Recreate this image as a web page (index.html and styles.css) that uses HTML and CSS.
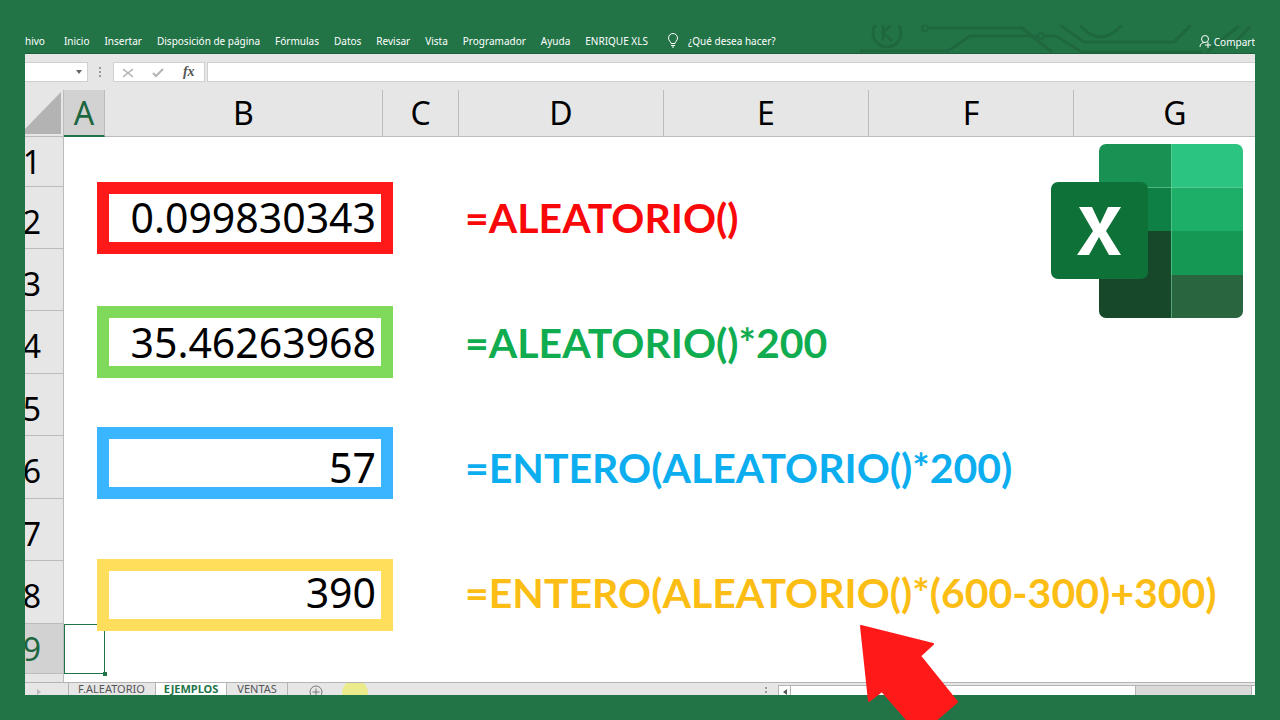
FILE: index.html
```html
<!DOCTYPE html>
<html lang="es">
<head>
<meta charset="utf-8">
<title>Función ALEATORIO en Excel</title>
<link rel="stylesheet" href="styles.css">
</head>
<body>
<main class="window">
  <header class="ribbon">
    <svg class="circuit" viewBox="0 0 400 29" fill="none" stroke="#1f683f" stroke-width="3" aria-hidden="true">
      <circle cx="32" cy="8" r="14"/>
      <path d="M28 0v16M36 0l-8 8 9 8"/>
      <circle cx="70" cy="3" r="3" stroke-width="2"/>
      <path d="M73 3h94l30 24M5 26h88l22-15h68M189 11h12l26 16h120M205 0l24 17h90l17-17M225 0q20 24 42 0M352 27l32-26M375 22l20-20"/>
      <circle cx="186" cy="11" r="3" stroke-width="2"/>
    </svg>
    <nav class="menu">
      <button class="file">hivo</button><button>Inicio</button><button>Insertar</button><button>Disposición de página</button><button>Fórmulas</button><button>Datos</button><button>Revisar</button><button>Vista</button><button>Programador</button><button>Ayuda</button><button>ENRIQUE XLS</button>
      <button class="tell"><svg width="12" height="15" viewBox="0 0 12 15" fill="none" stroke="#fff" aria-hidden="true"><path d="M4 10.500C4 8.500 1.500 8 1.500 5a4.500 4.500 0 0 1 9 0c0 3-2.500 3.500-2.500 5.500zM4 12.500h4M5 14h2"/></svg>¿Qué desea hacer?</button>
    </nav>
    <button class="share"><svg width="13" height="13" viewBox="0 0 13 13" fill="none" stroke="#fff" aria-hidden="true"><circle cx="6" cy="4" r="3.500"/><path d="M1 12c0-3 2-4.500 5-4.500M6 10h6M9 7v6"/></svg>Compart</button>
  </header>

  <section class="formula-bar">
    <button class="name-box" aria-label="Cuadro de nombres"><svg width="6" height="4" viewBox="0 0 6 4" aria-hidden="true"><path d="M0 0h6L3 4z" fill="#666"/></svg></button>
    <svg class="dots" width="3" height="10" viewBox="0 0 3 10" fill="#999" aria-hidden="true"><path d="M0 0h2v2H0zM0 4h2v2H0zM0 8h2v2H0z"/></svg>
    <div class="edit">
      <button aria-label="Cancelar"><svg width="10" height="10" viewBox="0 0 10 10" fill="none" stroke="#b3b3b3" stroke-width="1.500"><path d="M0 1l10 8M10 1L0 9"/></svg></button>
      <button aria-label="Introducir"><svg width="12" height="10" viewBox="0 0 12 10" fill="none" stroke="#b3b3b3" stroke-width="2"><path d="M1 5l3 3 7-7"/></svg></button>
      <button class="fx" aria-label="Insertar función">fx</button>
    </div>
    <input class="formula" type="text" aria-label="Barra de fórmulas">
  </section>

  <section class="sheet">
    <table class="grid">
      <colgroup><col class="c-num"><col class="c-a"><col class="c-b"><col class="c-c"><col class="c-d"><col class="c-d"><col class="c-d"><col></colgroup>
      <thead>
        <tr><th class="corner"><svg width="37" height="42" viewBox="0 0 37 42" aria-hidden="true"><path d="M37 0v42H0v-4z" fill="#b3b3b3"/></svg></th><th class="current">A</th><th>B</th><th>C</th><th>D</th><th>E</th><th>F</th><th>G</th></tr>
      </thead>
      <tbody>
        <tr class="short"><th>1</th><td colspan="7"></td></tr>
        <tr><th>2</th><td></td><td class="value">0.099830343</td><td></td><td class="expr red" colspan="4">=ALEATORIO()</td></tr>
        <tr><th>3</th><td colspan="7"></td></tr>
        <tr class="tall"><th>4</th><td></td><td class="value">35.46263968</td><td></td><td class="expr green" colspan="4">=ALEATORIO()*200</td></tr>
        <tr><th>5</th><td colspan="7"></td></tr>
        <tr class="tall"><th>6</th><td></td><td class="value">57</td><td></td><td class="expr blue" colspan="4">=ENTERO(ALEATORIO()*200)</td></tr>
        <tr><th>7</th><td colspan="7"></td></tr>
        <tr class="tall"><th>8</th><td></td><td class="value">390</td><td></td><td class="expr gold" colspan="4">=ENTERO(ALEATORIO()*(600-300)+300)</td></tr>
        <tr class="short"><th class="current">9</th><td class="selected"></td><td colspan="6"></td></tr>
        <tr class="rest"><th></th><td colspan="7"></td></tr>
      </tbody>
    </table>
    <span class="handle"></span>
    <div class="frame frame-red"></div>
    <div class="frame frame-green"></div>
    <div class="frame frame-blue"></div>
    <div class="frame frame-yellow"></div>
    <svg class="logo" width="194" height="176" viewBox="0 0 194 176" role="img" aria-label="Excel">
      <defs><clipPath id="book"><rect x="49" y="1" width="144" height="174" rx="7"/></clipPath></defs>
      <g clip-path="url(#book)">
        <path fill="#189153" d="M49 1h72v44H49z"/><path fill="#2bc481" d="M121 1h73v44h-73z"/>
        <path fill="#0f8045" d="M49 45h72v43H49z"/><path fill="#1dae68" d="M121 45h73v43h-73z"/>
        <path fill="#18482a" d="M49 88h72v88H49z"/><path fill="#149853" d="M121 88h73v44h-73z"/>
        <path fill="#29663f" d="M121 132h73v44h-73z"/>
        <path d="M121.500 0v176M49 44.500h145" stroke="#6fcf9f" stroke-opacity=".6"/>
      </g>
      <rect x="1" y="39" width="97" height="97" rx="7" fill="#0e7238"/>
      <path fill="#fff" d="M29 64h13l8 17 8-17h13L56 88l15 24H59l-10-18-10 18H27l16-24z"/>
    </svg>
  </section>

  <footer class="tabs">
    <svg class="next" width="5" height="6" viewBox="0 0 5 6" aria-hidden="true"><path d="M0 0l4 3-4 3z" fill="#bbb"/></svg>
    <button class="first">F.ALEATORIO</button><button class="active">EJEMPLOS</button><button>VENTAS</button>
    <button class="add" aria-label="Hoja nueva"><svg width="14" height="14" viewBox="0 0 14 14" fill="none" stroke="#777"><circle cx="7" cy="7" r="6"/><path d="M3.500 7h7M7 3.500v7"/></svg></button>
    <span class="pointer"></span>
    <svg class="grip" width="2" height="10" viewBox="0 0 2 10" fill="#999" aria-hidden="true"><path d="M0 0h2v2H0zM0 4h2v2H0zM0 8h2v2H0z"/></svg>
    <div class="scroll"><button class="left" aria-label="Desplazar a la izquierda"><svg width="4" height="6" viewBox="0 0 4 6"><path d="M4 0v6L0 3z" fill="#555"/></svg></button><span class="thumb"></span><span class="end"></span></div>
  </footer>
</main>
<svg class="arrow" width="101" height="98" viewBox="0 0 101 98" aria-hidden="true"><path d="M2 4L74 22 61 34 98 80 77 98 77 100H50L23 69 10 79z" fill="#ff1919" stroke="#ff1919" stroke-width="2" stroke-linejoin="round"/></svg>
</body>
</html>
```

FILE: styles.css
```css
* { box-sizing: border-box; }

body {
  margin: 0;
  min-height: 100vh;
  display: flex;
  position: relative;
  overflow: hidden;
  padding: 25px;
  background: #227447;
  color: #000;
  font-family: "Noto Sans", "Open Sans", sans-serif;
}

button {
  border: 0;
  padding: 0;
  background: none;
  color: inherit;
  font: inherit;
  white-space: nowrap;
}

.window {
  flex: 1;
  min-width: 0;
  display: flex;
  flex-direction: column;
  overflow: hidden;
  background: #e6e6e6;
}

/* Ribbon */
.ribbon {
  position: relative;
  display: flex;
  align-items: center;
  justify-content: space-between;
  height: 29px;
  overflow: hidden;
  background: #227447;
  border-bottom: 1px solid #1c5f3a;
  color: #fff;
  font-size: 10px;
  line-height: 16px;
}

.circuit {
  position: absolute;
  right: 0;
  top: 0;
  width: 400px;
  height: 29px;
}

.menu {
  display: flex;
  gap: 15px;
  padding-top: 3px;
}

.file { margin-right: 4px; }

.tell {
  display: flex;
  align-items: center;
  gap: 9px;
  margin-left: 4px;
}

.share {
  position: relative;
  display: flex;
  align-items: center;
  gap: 2px;
  padding-top: 5px;
}

/* Formula bar */
.formula-bar {
  display: flex;
  height: 36px;
  padding: 8px 0;
}

.name-box {
  width: 63px;
  padding-right: 5px;
  background: #fff;
  border: solid #d0d0d0;
  border-width: 1px 1px 1px 0;
  display: flex;
  align-items: center;
  justify-content: flex-end;
}

.dots { align-self: center; margin: 0 11px; }

.edit {
  display: flex;
  align-items: center;
  justify-content: space-around;
  width: 92px;
  background: #fff;
  border: 1px solid #d0d0d0;
}

.fx {
  color: #555;
  font: italic 700 14px/16px "Liberation Serif", serif;
}

.formula {
  flex: 1;
  min-width: 0;
  margin-left: 2px;
  border: 1px solid #d0d0d0;
  border-right: 0;
  background: #fff;
}

/* Worksheet */
.sheet {
  position: relative;
  flex: 1;
  overflow: hidden;
  background: #fff;
}

.grid {
  width: calc(100% + 46px);
  margin-left: -24px;
  table-layout: fixed;
  border-spacing: 0;
}

.c-num { width: 63px; }
.c-a { width: 41px; }
.c-b { width: 278px; }
.c-c { width: 76px; }
.c-d { width: 205px; }

.grid th {
  padding: 0;
  background: #e6e6e6;
  border: solid #bcbcbc;
  border-width: 0 1px 1px 0;
  font-size: 32px;
  font-weight: 400;
  line-height: 44px;
}

.grid thead th { height: 47px; }

.grid tbody th {
  height: 62px;
  padding: 8px 22px 0 0;
  text-align: right;
}

.grid tbody .tall th { height: 63px; }
.grid tbody .short th { height: 50px; padding-top: 0; }
.grid tbody .rest th { height: 8px; border-bottom: 0; padding: 0; }

.grid td { padding: 0; white-space: nowrap; }

.grid .corner { text-align: right; line-height: 0; padding-right: 2px; }

.grid .current { background: #d2d2d2; color: #1c6640; }
.grid thead .current { border-bottom: 2px solid #227447; }

.grid .selected { border: 1px solid #227447; }

.grid .value {
  padding: 0 7px 2px 0;
  text-align: right;
  font-size: 41px;
  line-height: 56px;
}

.grid .expr {
  padding: 0 0 0 6px;
  font: 700 41px/56px Lato, "Open Sans", sans-serif;
}

.red { color: #f80808; }
.green { color: #10ad50; }
.blue { color: #0daeef; }
.gold { color: #fcbd14; }

/* Annotations drawn over the cells */
.handle {
  position: absolute;
  left: 78px;
  top: 582px;
  width: 4px;
  height: 4px;
  background: #227447;
}

.frame {
  position: absolute;
  left: 72px;
  width: 296px;
  height: 72px;
  border: 12px solid;
}

.frame-red { top: 92px; border-color: #ff1919; }
.frame-green { top: 216px; border-color: #7fd95a; }
.frame-blue { top: 337px; border-color: #3ab5ff; }
.frame-yellow { top: 469px; border-color: #ffde5c; }

.logo {
  position: absolute;
  top: 53px;
  right: 11px;
}

.arrow {
  position: absolute;
  left: 859px;
  bottom: 0;
}

/* Sheet tabs */
.tabs {
  display: flex;
  height: 13px;
  overflow: hidden;
  border-top: 1px solid #b4b4b4;
  background: #e6e6e6;
  color: #555;
  font-size: 11px;
  line-height: 12px;
}

.tabs button { height: 12px; padding: 0 10px; border-right: 1px solid #b4b4b4; }
.tabs .next { margin: 6px 26px 0 12px; }
.tabs .first { border-left: 1px solid #b4b4b4; padding-left: 9px; }
.tabs .active { background: #fff; color: #227447; font-weight: 700; padding: 0 8px; }
.tabs .add { padding: 2px 0 0; margin-left: 21px; border: 0; line-height: 0; height: 16px; }

.pointer {
  width: 26px;
  height: 26px;
  flex: none;
  margin: -3px 0 0 19px;
  border-radius: 50%;
  background: #ebeb8c;
}

.grip { margin: 4px 11px 0 auto; }

.scroll {
  display: flex;
  width: 477px;
  height: 18px;
  margin-top: 2px;
  background: #d9d9d9;
  border: 1px solid #b4b4b4;
  border-right: 0;
}

.tabs .left { width: 12px; padding: 3px 4px; background: #fff; line-height: 0; }
.thumb { width: 345px; background: #fff; border: solid #b4b4b4; border-width: 0 1px; border-left: 0; }
.end { width: 4px; margin-left: auto; background: #fff; border-left: 1px solid #b4b4b4; }
```
